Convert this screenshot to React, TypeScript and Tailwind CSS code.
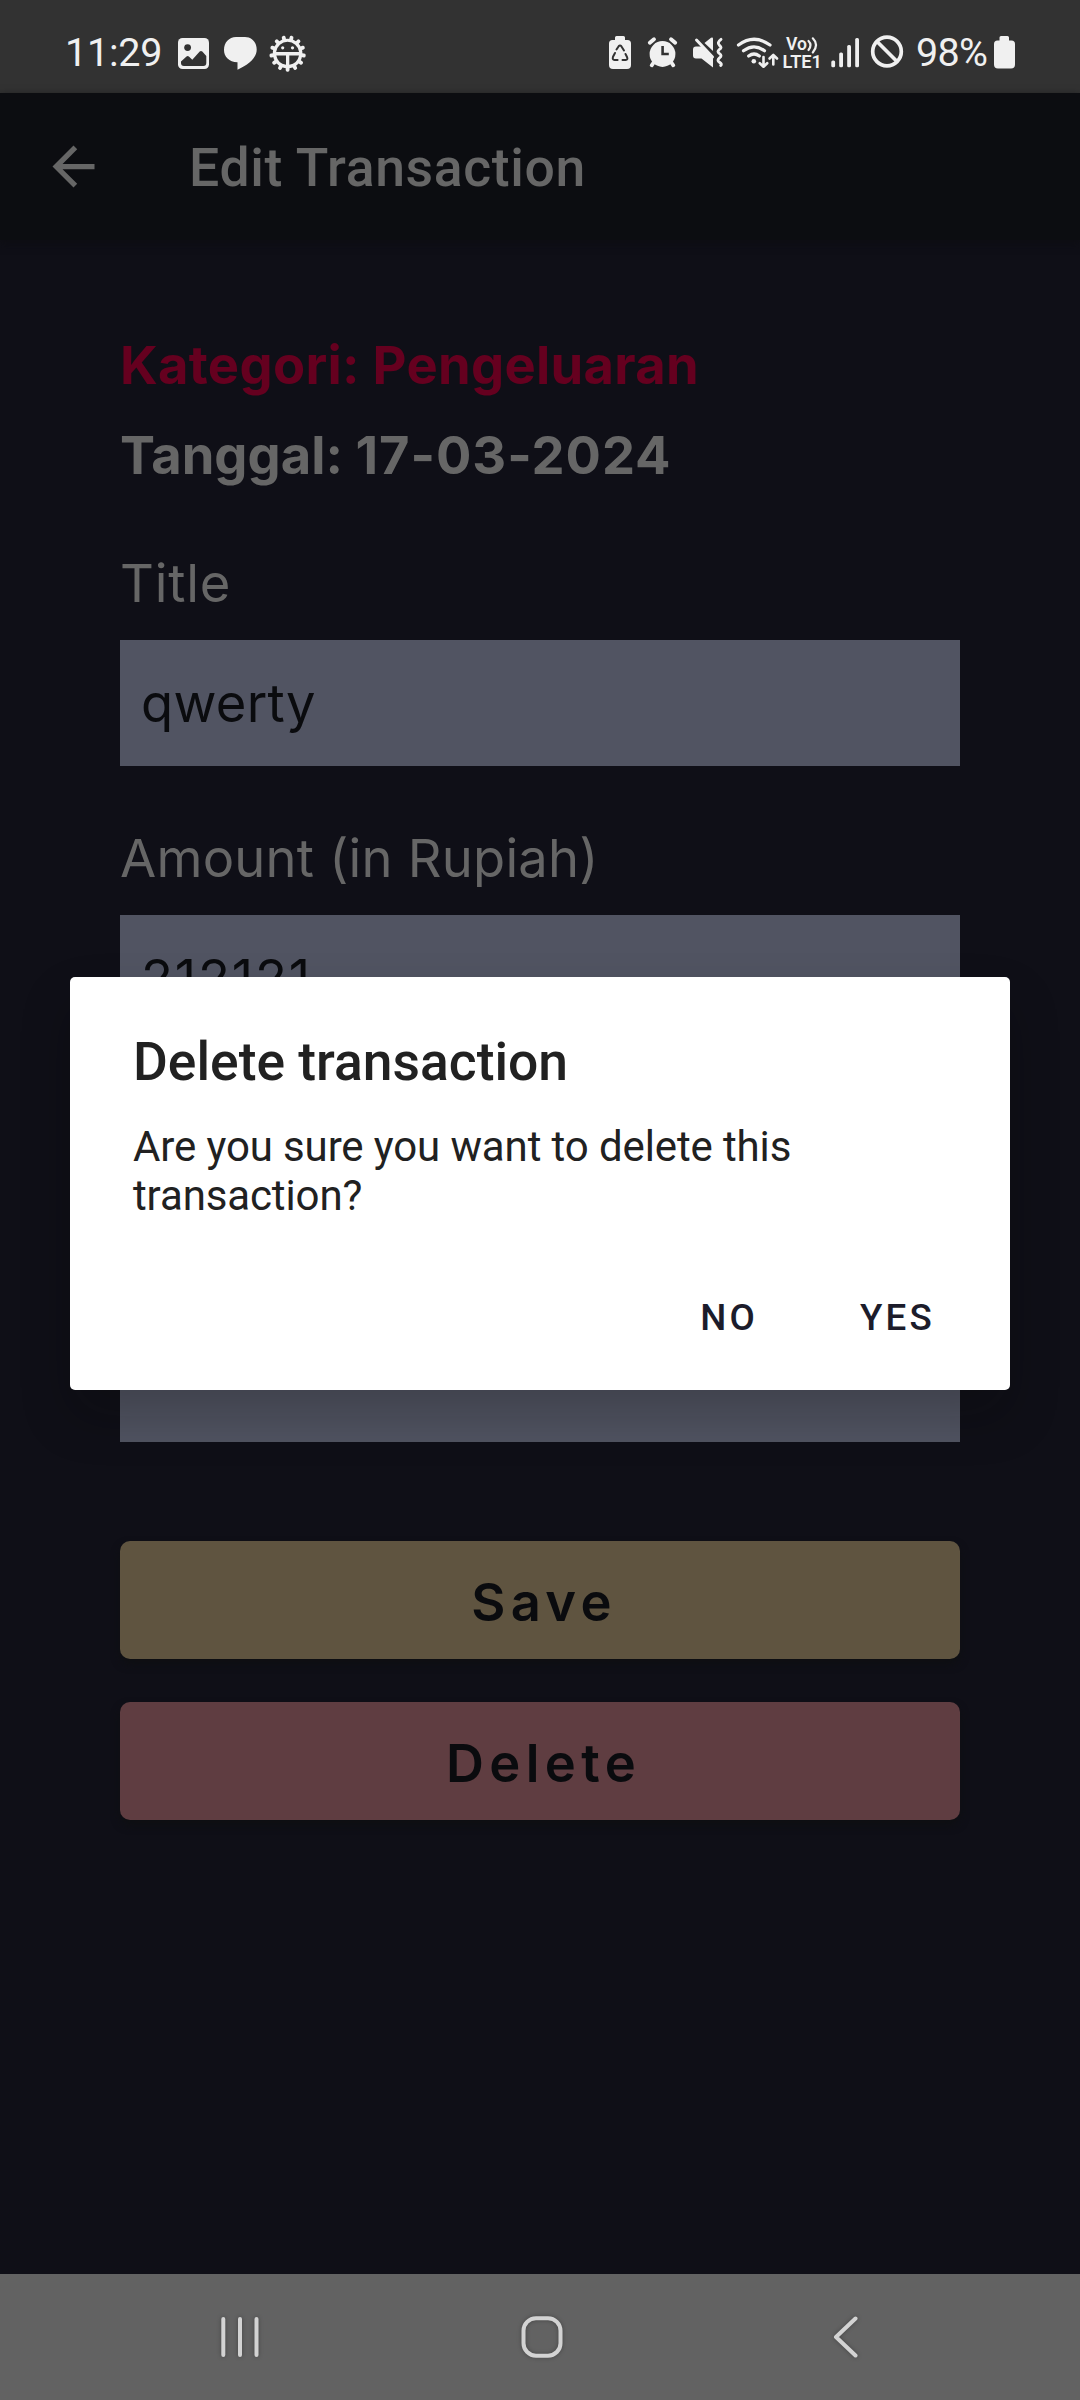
import React from "react";

const teeth = Array.from({ length: 13 }, (_, i) => 180 + (i * 360) / 13);

function StatusBar() {
  return (
    <div className="flex h-[93px] shrink-0 bg-[#323232] text-[#f0f0f0]">
      <span className="mt-[29px] ml-[65px] w-[113px] text-[39.5px] leading-[48px] tracking-[-0.2px]">11:29</span>
      <svg className="h-[93px] w-[132px] shrink-0" viewBox="178 0 132 93" fill="#f0f0f0">
        <rect x="178" y="38" width="31" height="31" rx="4.500" />
        <circle cx="187.600" cy="47.600" r="3.400" fill="#323232" />
        <path
          d="M181 61.500l5.500-5a1.800 1.800 0 012.400 0l3.400 3.200 7.400-8.100a1.800 1.800 0 012.600 0l4 4.300V63a3 3 0 01-3 3h-19.300a3 3 0 01-3-3z"
          fill="#323232"
        />
        <path d="M236 37H245C252 37 256.700 42.500 256.700 49.500C256.700 58 249 64.500 237.500 69.800V62.300C229 61.800 224 57 224 50C224 42.500 229 37 236 37z" />
        <g>
          {teeth.map((a) => (
            <rect key={a} x="285.700" y="35.300" width="3.800" height="6" rx="1.700" transform={`rotate(${a} 287.600 53.500)`} />
          ))}
          <circle cx="287.600" cy="53.500" r="14.800" />
          <path
            d="M276.100 51.900a11.600 11.600 0 0123 0zM276.300 55.500h9.700v9.200a11.600 11.600 0 01-9.700-9.200zM289.300 55.500h9.700a11.600 11.600 0 01-9.700 9.200z"
            fill="#323232"
          />
          <circle cx="282.700" cy="47.800" r="1.600" />
          <circle cx="292.500" cy="47.800" r="1.600" />
        </g>
      </svg>
      <svg className="ml-auto h-[93px] w-[310px] shrink-0" viewBox="605 0 310 93" fill="#f0f0f0">
        <path d="M616.500 36h7a1.500 1.500 0 011.500 1.500V40h2.500a3.500 3.500 0 013.500 3.500V65a4 4 0 01-4 4h-14a4 4 0 01-4-4V43.500a3.500 3.500 0 013.500-3.500H615v-2.500a1.500 1.500 0 011.500-1.500z" />
        <path
          d="M616.500 49.500l2.200-3.300q1.300-1.600 2.600 0l2.700 4.300M615 53l-2 3.800q-1 3 1.600 3.200h3M622.500 60h3q2.800-.3 1.500-3l-1.500-3"
          stroke="#323232"
          strokeWidth="2"
          fill="none"
          strokeLinecap="round"
          strokeLinejoin="round"
        />
        <g>
          <circle cx="662.500" cy="54" r="12.900" />
          <path d="M649.800 42.800l4.200-3.600M675.200 42.800l-4.200-3.600M654 62l-2.300 3.300M671 62l2.300 3.300" stroke="#f0f0f0" strokeWidth="3.800" strokeLinecap="round" />
          <path d="M662.600 46v8h6.200" stroke="#323232" strokeWidth="2.600" fill="none" />
        </g>
        <path d="M696 46.500h5.500L713 58v9.500L701.500 58.500H696a3 3 0 01-3-3v-6a3 3 0 013-3zM704.500 43l6.500-5.200q2-1.200 2 1V51z" />
        <path d="M696.500 40l16 17" stroke="#f0f0f0" strokeWidth="3" strokeLinecap="round" />
        <path
          d="M721 39.300q-4.500 3.400-1.500 6t0 4q-3 2.300 0 4.300t0 4.300q-3 2.400 0 4.400t1.200 3.200"
          stroke="#f0f0f0"
          strokeWidth="2.900"
          fill="none"
          strokeLinecap="round"
          strokeLinejoin="round"
        />
        <g fill="none" stroke="#f0f0f0" strokeWidth="3.200" strokeLinecap="round" strokeLinejoin="round">
          <path d="M738.500 45q15.500-11.500 31.500 0M743.500 50.800q10.500-8 21 0M748.700 56q5.300-4 10.600 0" />
          <path d="M763.500 57v9.500M759.800 63.200l3.700 3.500 3.700-3.500M773.300 64.500V55M769.600 58.500l3.700-3.600 3.700 3.600" strokeWidth="2.600" />
          <path d="M808.500 41q4 4 0 9M812.800 38.300q6.500 6.500 0 14.200" strokeWidth="2.200" />
        </g>
        <circle cx="753.800" cy="61.200" r="2.300" />
        <text x="786" y="50.300" fontSize="17.500" fontWeight="600" textLength="21" lengthAdjust="spacingAndGlyphs">Vo</text>
        <text x="782.500" y="68" fontSize="18.300" fontWeight="600" textLength="39.500" lengthAdjust="spacingAndGlyphs">LTE1</text>
        <g>
          <rect x="831.300" y="60.500" width="3.800" height="6.800" rx="1.500" />
          <rect x="839.200" y="52.500" width="3.800" height="14.800" rx="1.500" />
          <rect x="847.200" y="45" width="3.800" height="22.300" rx="1.500" />
          <rect x="855.200" y="38" width="3.800" height="29.300" rx="1.500" />
        </g>
        <g fill="none" stroke="#f0f0f0" strokeWidth="3.700">
          <circle cx="887" cy="51.500" r="14.300" />
          <path d="M877 41.500l20 20" />
        </g>
      </svg>
      <span className="mt-[29px] w-[78px] pl-[1px] text-[39.5px] leading-[48px] tracking-[-0.7px]">98%</span>
      <svg className="mr-[62px] h-[93px] w-[25px] shrink-0" viewBox="993 0 25 93" fill="#f0f0f0">
        <path d="M1001 36h6.500a1.500 1.500 0 011.500 1.500V40.500h2.500a3.500 3.500 0 013.500 3.500V64.500a4 4 0 01-4 4h-13a4 4 0 01-4-4V44a3.500 3.500 0 013.500-3.500h2v-3a1.500 1.500 0 011.500-1.500z" />
      </svg>
    </div>
  );
}

function AppBar() {
  return (
    <header className="relative flex h-[147px] shrink-0 items-start bg-[#0c0d11] text-[#666666] shadow-[0_3px_8px_rgba(12,13,17,0.8)]">
      <svg className="mt-[42px] ml-[42px] size-[63px]" viewBox="0 0 24 24" fill="#666666">
        <path d="M20 11H7.830l5.590-5.590L12 4l-8 8 8 8 1.410-1.410L7.830 13H20v-2z" />
      </svg>
      <h1 className="mt-[43px] ml-[84px] text-[53.5px] leading-[64px] font-medium tracking-[0.65px]">Edit Transaction</h1>
    </header>
  );
}

function Label({ children }: { children: React.ReactNode }) {
  return <span className="mb-[25px] text-[52.5px] leading-[64px] text-[#666666]">{children}</span>;
}

function Value({ children }: { children: React.ReactNode }) {
  return (
    <span className="flex h-[126px] items-center bg-[#515462] px-[21px] text-[52.5px] leading-[64px] text-[#0a0b0e]">
      {children}
    </span>
  );
}

function Form() {
  return (
    <main className="flex grow flex-col bg-[#0f0f17] px-[120px] pt-[93px] font-['Inter']">
      <p className="text-[52.5px] leading-[64px] font-bold tracking-[0.3px] text-[#65001f]">Kategori: Pengeluaran</p>
      <p className="mt-[26px] mb-[64px] text-[52.5px] leading-[64px] font-bold text-[#666666]">
        Tanggal: <span className="tracking-[0.95px]">17-03-2024</span>
      </p>
      <div className="flex flex-col gap-[60px]">
        <label className="flex flex-col tracking-[0.3px]">
          <Label>
            <span className="tracking-[0.8px]">Title</span>
          </Label>
          <Value>qwerty</Value>
        </label>
        <label className="flex flex-col tracking-[0.22px]">
          <Label>Amount (in Rupiah)</Label>
          <Value>
            <span className="tracking-[1.8px]">212121</span>
          </Value>
        </label>
      </div>
      <div className="mt-[149px] h-[252px] bg-[#515462]" />
      <button className="mt-[99px] h-[118px] rounded-[10px] bg-[#5f5440] pt-[4px] pl-[8px] text-[52.5px] leading-[64px] font-semibold tracking-[5.3px] text-[#0a0b0e] shadow-[0_5px_8px_#0e0f12]">
        Save
      </button>
      <button className="mt-[43px] h-[118px] rounded-[10px] bg-[#5f3d41] pt-[4px] pl-[7px] text-[52.5px] leading-[64px] font-semibold tracking-[5.4px] text-[#0a0b0e] shadow-[0_5px_8px_#0e0f12]">
        Delete
      </button>
    </main>
  );
}

function NavBar() {
  return (
    <nav className="flex h-[126px] shrink-0 items-start bg-[#626262]">
      <svg
        className="h-[126px] w-full drop-shadow-[0_0_2px_rgba(0,0,0,0.3)]"
        viewBox="0 2274 1080 126"
        fill="none"
        stroke="#d3d3d3"
        strokeWidth="4"
        strokeLinecap="round"
        strokeLinejoin="round"
      >
        <path d="M223.300 2319v36M240 2319v36M256.500 2319v36" />
        <rect x="523.500" y="2318.200" width="37" height="37.500" rx="12.500" />
        <path d="M855.500 2318.500L836 2337l19.500 18.500" />
      </svg>
    </nav>
  );
}

function DeleteDialog() {
  return (
    <div
      role="dialog"
      className="absolute top-[977px] left-[70px] flex h-[413px] w-[940px] flex-col rounded-[5px] bg-white px-[63px] text-[#212121] shadow-[0_26px_50px_rgba(8,10,8,0.24)]"
    >
      <h2 className="mt-[53px] text-[53.4px] leading-[64px] font-medium">Delete transaction</h2>
      <p className="mt-[28px] w-[760px] text-[42px] leading-[49px] tracking-[-0.12px]">Are you sure you want to delete this transaction?</p>
      <div className="mt-[76px] mr-[12px] flex justify-end gap-[102px] text-[36.75px] leading-[44px] font-medium tracking-[3.2px] text-[#1c1c2b]">
        <button>NO</button>
        <button>YES</button>
      </div>
    </div>
  );
}

export default function App() {
  return (
    <div className="relative flex h-[2400px] w-full flex-col overflow-hidden font-['Roboto',sans-serif]">
      <StatusBar />
      <AppBar />
      <Form />
      <NavBar />
      <DeleteDialog />
    </div>
  );
}
